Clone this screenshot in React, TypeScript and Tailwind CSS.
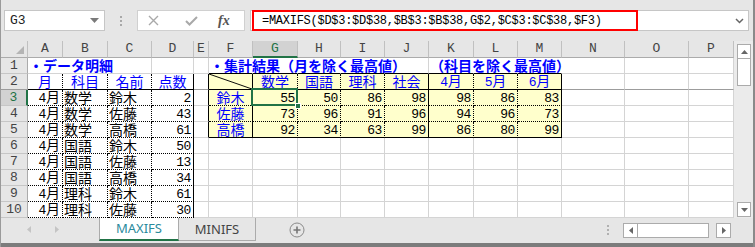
import React from 'react';

type Bd = 'g' | 'd' | 's' | 'n' | 'f';
type Cell = { t?: string; a?: 'l' | 'c' | 'r'; blue?: boolean; bold?: boolean; diag?: boolean; sel?: boolean };

const CJK = "font-['Noto_Sans_CJK_JP',sans-serif]";
const MONO = "font-['Liberation_Mono',monospace]";

const COLS = ['A', 'B', 'C', 'D', 'E', 'F', 'G', 'H', 'I', 'J', 'K', 'L', 'M', 'N', 'O', 'P'];

const RIGHT: Record<Bd, string> = {
  g: 'border-r border-r-[#d4d4d4]',
  d: 'border-r border-r-black [border-right-style:dotted]!',
  s: 'border-r border-r-black',
  n: 'border-r border-r-transparent',
  f: 'border-r border-r-[#9c9c9c]',
};
const BOTTOM: Record<Bd, string> = {
  g: 'border-b border-b-[#d4d4d4]',
  d: 'border-b border-b-black [border-bottom-style:dotted]!',
  s: 'border-b border-b-black',
  n: 'border-b border-b-transparent',
  f: 'border-b border-b-[#9c9c9c]',
};

const DATA: [string, string, string, number][] = [
  ['4月', '数学', '鈴木', 2],
  ['4月', '数学', '佐藤', 43],
  ['4月', '数学', '高橋', 61],
  ['4月', '国語', '鈴木', 50],
  ['4月', '国語', '佐藤', 13],
  ['4月', '国語', '高橋', 34],
  ['4月', '理科', '鈴木', 61],
  ['4月', '理科', '佐藤', 30],
];

const SUMMARY: [string, number[]][] = [
  ['鈴木', [55, 50, 86, 98, 98, 86, 83]],
  ['佐藤', [73, 96, 91, 96, 94, 96, 73]],
  ['高橋', [92, 34, 63, 99, 86, 80, 99]],
];

const HEAD2 = ['数学', '国語', '理科', '社会', '4月', '5月', '6月'];

function cellAt(r: number, c: number): Cell {
  if (r === 1) {
    if (c === 0) return { t: '・データ明細', a: 'l', blue: true, bold: true };
    if (c === 5) return { t: '・集計結果（月を除く最高値）', a: 'l', blue: true, bold: true };
    if (c === 10) return { t: '（科目を除く最高値）', a: 'l', blue: true, bold: true };
    return {};
  }
  if (r === 2) {
    if (c <= 3) return { t: ['月', '科目', '名前', '点数'][c], a: 'c', blue: true };
    if (c === 5) return { diag: true };
    if (c >= 6 && c <= 12) return { t: HEAD2[c - 6], a: 'c', blue: true };
    return {};
  }
  const d = DATA[r - 3];
  if (c <= 3) {
    if (c === 0) return { t: d[0], a: 'r' };
    if (c === 1) return { t: d[1], a: 'l' };
    if (c === 2) return { t: d[2], a: 'l' };
    return { t: String(d[3]), a: 'r' };
  }
  if (r <= 5) {
    const s = SUMMARY[r - 3];
    if (c === 5) return { t: s[0], a: 'c', blue: true };
    if (c >= 6 && c <= 12) return { t: String(s[1][c - 6]), a: 'r', sel: r === 3 && c === 6 };
  }
  return {};
}

function rightOf(r: number, c: number): Bd {
  if (r === 1) {
    if (c === 0 || c === 1) return 'n';
    if (c >= 5 && c <= 8) return 'n';
    if (c >= 10 && c <= 12) return 'n';
    return 'g';
  }
  if (c <= 2) return 'd';
  if (c === 3) return 's';
  if (r <= 5) {
    if (c === 4 || c === 5 || c === 9 || c === 12) return 's';
    if (c >= 6 && c <= 11) return 'd';
  }
  return 'g';
}

function bottomOf(r: number, c: number): Bd {
  const sum = c >= 5 && c <= 12;
  if (r === 1) return sum ? 's' : 'g';
  if (r === 2) return c <= 3 || sum ? 's' : 'f';
  if (c <= 3) return 'd';
  if (sum && (r === 3 || r === 4)) return 'd';
  if (sum && r === 5) return 's';
  return 'g';
}

const Txt = ({ s }: { s: string }) => (
  <>
    {s.split(/(\d+)/).map((p, i) =>
      /^\d+$/.test(p) ? (
        <span key={i} className={`${MONO} text-[13px] tracking-[-0.4px]`}>
          {p}
        </span>
      ) : p ? (
        <span key={i}>{p}</span>
      ) : null
    )}
  </>
);

const SheetCell = ({ r, c }: { r: number; c: number }) => {
  const cell = cellAt(r, c);
  const yellow = r >= 2 && r <= 5 && c >= 5 && c <= 12;
  const align = cell.a === 'r' ? 'justify-end pr-[2px]' : cell.a === 'c' ? 'justify-center' : 'justify-start pl-[1px]';
  return (
    <div
      className={`relative flex items-center whitespace-nowrap ${RIGHT[rightOf(r, c)]} ${BOTTOM[bottomOf(r, c)]} ${align} ${
        yellow ? 'bg-[#ffffcc]' : ''
      }`}
    >
      {cell.t && (
        <span
          className={`${CJK} text-[14px] leading-[15px] ${cell.blue ? 'text-[#0000ff]' : 'text-black'} ${
            cell.bold ? 'font-bold' : ''
          } relative z-[1]`}
        >
          <Txt s={cell.t} />
        </span>
      )}
      {cell.diag && (
        <svg className="absolute inset-0 w-full h-full" preserveAspectRatio="none" viewBox="0 0 44 16">
          <line x1="0" y1="0" x2="44" y2="16" stroke="black" strokeWidth="1" />
        </svg>
      )}
      {cell.sel && (
        <>
          <div className="absolute left-[-2px] top-[-2px] right-[-1px] bottom-[-1px] border-2 border-[#217346] z-10" />
          <div className="absolute right-[-4px] bottom-[-4px] w-[6px] h-[6px] bg-[#217346] border border-white z-20" />
        </>
      )}
    </div>
  );
};

const FormulaBar = () => (
  <div className="h-[41px] flex items-start pt-[10px] bg-[#e6e6e6]">
    <div className="ml-[3px] w-[101px] h-[21px] bg-white border border-[#c6c6c6] flex items-center justify-between pl-[5px] pr-[5px]">
      <span className={`${MONO} text-[13px] text-[#222]`}>G3</span>
      <svg width="9" height="5" viewBox="0 0 9 5">
        <polygon points="0,0 9,0 4.5,5" fill="#7a7a7a" />
      </svg>
    </div>
    <div className="ml-[15px] mt-[6px] flex flex-col gap-[2px]">
      <div className="w-[2px] h-[2px] bg-[#a8a8a8]" />
      <div className="w-[2px] h-[2px] bg-[#a8a8a8]" />
      <div className="w-[2px] h-[2px] bg-[#a8a8a8]" />
    </div>
    <div className="ml-[15px] w-[108px] h-[21px] bg-white border border-[#d0d0d0] flex items-center">
      <svg className="ml-[10px]" width="11" height="11" viewBox="0 0 11 11">
        <path d="M1 1 L10 10 M10 1 L1 10" stroke="#a9a9a9" strokeWidth="1.4" />
      </svg>
      <svg className="ml-[26px]" width="13" height="10" viewBox="0 0 13 10">
        <path d="M1 5 L4.5 8.5 L12 1" stroke="#a9a9a9" strokeWidth="2" fill="none" />
      </svg>
      <span className="ml-[20px] font-['Liberation_Serif',serif] italic font-bold text-[14px] text-[#555] leading-none">
        fx
      </span>
    </div>
    <div className="ml-[5px] w-[499px] h-[21px] bg-white border border-[#c6c6c6] flex items-stretch justify-between">
      <div className="ml-[1px] -my-[1px] w-[386px] border-2 border-[#ff0000] flex items-center pl-[8px]">
        <span className={`${MONO} text-[12px] tracking-[-0.27px] text-black whitespace-nowrap`}>
          =MAXIFS($D$3:$D$38,$B$3:$B$38,G$2,$C$3:$C$38,$F3)
        </span>
      </div>
      <div className="flex items-center pr-[4px]">
        <svg width="9" height="6" viewBox="0 0 9 6">
          <path d="M1 1 L4.5 4.5 L8 1" stroke="#666" strokeWidth="1.5" fill="none" />
        </svg>
      </div>
    </div>
  </div>
);

const Sheet = () => (
  <div className="grid grid-cols-[27px_35px_45px_44px_42px_15px_44px_45px_43px_44px_44px_45px_44px_44px_63px_64px_45px] grid-rows-[17px_repeat(10,16px)] bg-white w-[733px]">
    <div className="relative bg-[#e6e6e6] border-r border-r-[#c0c0c0] border-b border-b-[#ababab]">
      <svg className="absolute right-[3px] bottom-[3px]" width="8" height="8" viewBox="0 0 8 8">
        <polygon points="8,0 8,8 0,8" fill="#b4b4b4" />
      </svg>
    </div>
    {COLS.map((l, i) => (
      <div
        key={l}
        className={`flex items-center justify-center ${MONO} text-[13px] ${
          i === 6
            ? 'bg-[#d2d2d2] text-[#217346] border-b-2 border-b-[#217346]'
            : 'bg-[#e6e6e6] text-[#444] border-b border-b-[#ababab]'
        } border-r border-r-[#c0c0c0]`}
      >
        {l}
      </div>
    ))}
    {Array.from({ length: 10 }, (_, k) => k + 1).map((r) => (
      <React.Fragment key={r}>
        <div
          className={`flex items-center justify-center ${MONO} text-[13px] border-b ${
            r === 2 ? 'border-b-[#9c9c9c]' : 'border-b-[#c6c6c6]'
          } ${
            r === 3
              ? 'bg-[#d2d2d2] text-[#217346] border-r-2 border-r-[#217346]'
              : 'bg-[#e6e6e6] text-[#444] border-r border-r-[#ababab]'
          }`}
        >
          {r}
        </div>
        {COLS.map((_, c) => (
          <SheetCell key={c} r={r} c={c} />
        ))}
      </React.Fragment>
    ))}
  </div>
);

const VScroll = () => (
  <div className="w-[19px] flex flex-col pl-[3px] bg-[#ebebeb]">
    <div className="mt-[3px] w-[14px] h-[15px] bg-white border border-[#ababab] flex items-center justify-center">
      <svg width="7" height="4" viewBox="0 0 7 4">
        <polygon points="0,4 7,4 3.5,0" fill="#666" />
      </svg>
    </div>
    <div className="w-[14px] h-[27px] bg-white border border-[#ababab] border-t-0" />
    <div className="flex-1" />
    <div className="mb-[1px] w-[14px] h-[15px] bg-white border border-[#ababab] flex items-center justify-center">
      <svg width="7" height="4" viewBox="0 0 7 4">
        <polygon points="0,0 7,0 3.5,4" fill="#666" />
      </svg>
    </div>
  </div>
);

const TabBar = () => (
  <div className="h-[25px] flex items-start bg-[#e6e6e6]">
    <div className="w-[98px] h-[23px] flex items-center pl-[26px] gap-[24px]">
      <svg width="4" height="7" viewBox="0 0 4 7">
        <polygon points="4,0 4,7 0,3.5" fill="#c4c4c4" />
      </svg>
      <svg width="4" height="7" viewBox="0 0 4 7">
        <polygon points="0,0 0,7 4,3.5" fill="#c4c4c4" />
      </svg>
    </div>
    <div className="w-[80px] h-[23px] bg-white border-l border-r border-[#ababab] border-b-2 border-b-[#217346] flex items-center justify-center">
      <span className="font-['Noto_Sans',sans-serif] text-[13px] text-[#2a8a9c] leading-none">MAXIFS</span>
    </div>
    <div className="w-[77px] h-[23px] border-r border-b border-[#ababab] flex items-center justify-center">
      <span className="font-['Noto_Sans',sans-serif] text-[13px] text-[#444] leading-none">MINIFS</span>
    </div>
    <svg className="ml-[33px] mt-[4px]" width="16" height="16" viewBox="0 0 16 16">
      <circle cx="8" cy="8" r="7" fill="none" stroke="#8a8a8a" strokeWidth="1" />
      <path d="M8 4.5 V11.5 M4.5 8 H11.5" stroke="#777" strokeWidth="1.6" />
    </svg>
    <div className="ml-[302px] mt-[7px] flex flex-col gap-[2px]">
      <div className="w-[2px] h-[2px] bg-[#b0b0b0]" />
      <div className="w-[2px] h-[2px] bg-[#b0b0b0]" />
      <div className="w-[2px] h-[2px] bg-[#b0b0b0]" />
    </div>
    <div className="ml-[14px] mt-[5px] flex items-center">
      <div className="w-[15px] h-[15px] bg-white border border-[#ababab] flex items-center justify-center">
        <svg width="4" height="7" viewBox="0 0 4 7">
          <polygon points="4,0 4,7 0,3.5" fill="#666" />
        </svg>
      </div>
      <div className="w-[71px] h-[15px] bg-white border border-[#ababab] border-l-0" />
      <div className="w-[7px]" />
      <div className="w-[15px] h-[15px] bg-white border border-[#ababab] flex items-center justify-center">
        <svg width="4" height="7" viewBox="0 0 4 7">
          <polygon points="0,0 0,7 4,3.5" fill="#666" />
        </svg>
      </div>
    </div>
  </div>
);

export default function App() {
  return (
    <div className="w-[755px] h-[247px] overflow-hidden bg-[#e6e6e6] border-l border-l-[#9a9a9a] border-r-2 border-r-[#8a8a8a] flex flex-col">
      <FormulaBar />
      <div className="flex h-[177px]">
        <Sheet />
        <VScroll />
      </div>
      <TabBar />
      <div className="h-[4px] bg-[#7c7c7c]" />
    </div>
  );
}
